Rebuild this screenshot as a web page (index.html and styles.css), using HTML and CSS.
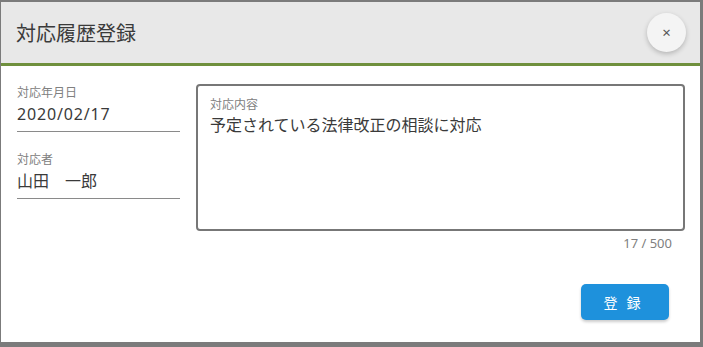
FILE: index.html
```html
<!DOCTYPE html>
<html lang="ja">
<head>
<meta charset="utf-8">
<link rel="stylesheet" href="styles.css">
</head>
<body>
<div class="dialog">
  <div class="header">
    <div class="title">対応履歴登録</div>
    <button class="close">×</button>
  </div>
  <div class="body">
    <div class="fields">
      <div class="field">
        <div class="label">対応年月日</div>
        <div class="value date">2020/02/17</div>
      </div>
      <div class="field">
        <div class="label">対応者</div>
        <div class="value">山田　一郎</div>
      </div>
    </div>
    <div class="content">
      <div class="textarea">
        <div class="label">対応内容</div>
        <div class="value">予定されている法律改正の相談に対応</div>
      </div>
      <div class="counter">17 / 500</div>
    </div>
  </div>
  <div class="actions">
    <button class="submit">登 録</button>
  </div>
</div>
</body>
</html>
```
FILE: styles.css
```css
html, body { margin: 0; padding: 0; }
body {
  background: #7b7b7b;
  width: 703px;
  height: 347px;
  overflow: hidden;
  font-family: "Noto Sans", "Noto Sans CJK JP", sans-serif;
  padding: 2px 0 0 1px;
  box-sizing: border-box;
}
.dialog {
  width: 699px;
  height: 340px;
  background: #fff;
  display: flex;
  flex-direction: column;
}
.header {
  height: 61px;
  background: #e8e8e8;
  border-bottom: 3px solid #6f903d;
  display: flex;
  align-items: center;
  justify-content: space-between;
  padding: 0 14px 0 15px;
  box-sizing: content-box;
}
.title {
  font-size: 20px;
  color: #3a3a3a;
}
.close {
  width: 39px;
  height: 39px;
  border-radius: 50%;
  border: none;
  background: #f4f4f4;
  box-shadow: 0 2px 5px rgba(0,0,0,0.22);
  font-size: 15px;
  color: #555;
  font-family: "Noto Sans", sans-serif;
  padding: 0;
  line-height: 1;
}
.body {
  display: flex;
  padding: 19px 0 0 16px;
  gap: 16px;
}
.fields {
  width: 163px;
  display: flex;
  flex-direction: column;
  gap: 20px;
}
.field {
  border-bottom: 1px solid #8a8a8a;
  padding-bottom: 4px;
}
.label {
  font-size: 12px;
  color: #808080;
  line-height: 16px;
}
.field .value {
  margin-top: 1px;
}
.value {
  font-size: 16px;
  color: #3a3a3a;
  line-height: 25px;
}
.date {
  letter-spacing: 0.85px;
}
.content {
  width: 489px;
  margin-top: -1px;
}
.textarea {
  height: 147px;
  border: 2px solid #777;
  border-radius: 4px;
  box-sizing: border-box;
  padding: 11px 12px 10px;
}
.counter {
  text-align: right;
  font-size: 13px;
  color: #808080;
  padding: 3px 13px 0 0;
}
.actions {
  display: flex;
  justify-content: flex-end;
  padding: 32px 31px 0 0;
}
.submit {
  width: 88px;
  height: 36px;
  background: #1e91dc;
  color: #fff;
  border: none;
  border-radius: 5px;
  font-family: "Noto Sans CJK JP", sans-serif;
  font-size: 14px;
  letter-spacing: 3px;
  padding-left: 3px;
  box-shadow: 0 2px 3px rgba(0,0,0,0.2);
}
```
